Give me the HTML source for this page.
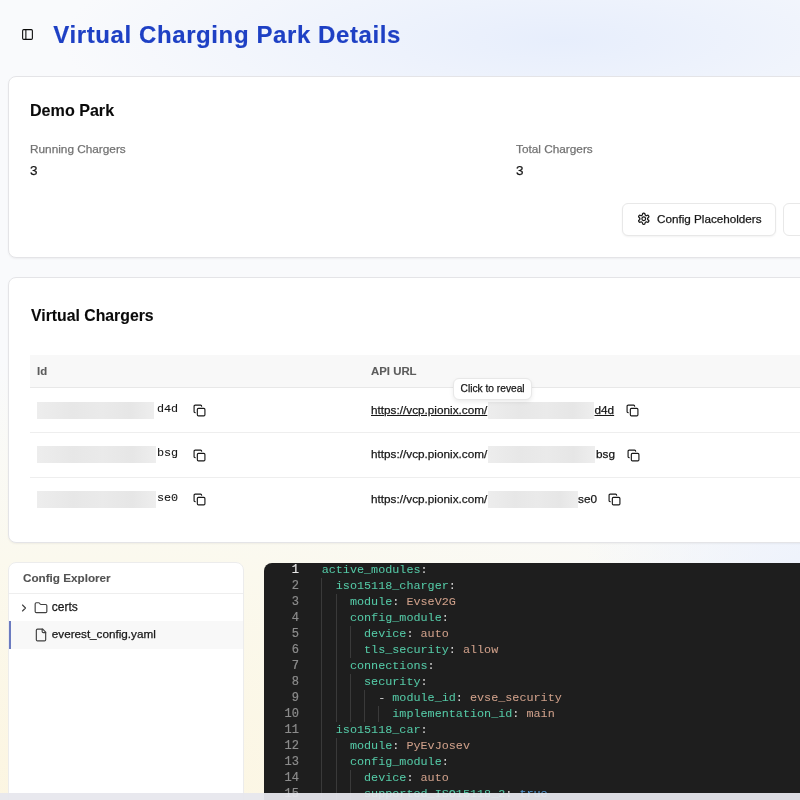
<!DOCTYPE html>
<html><head><meta charset="utf-8">
<style>
*{box-sizing:border-box;margin:0;padding:0}
html,body{width:800px;height:800px;overflow:hidden}
body{position:relative;font-family:"Liberation Sans",sans-serif;color:#0a0a0a;
background:
 radial-gradient(ellipse 500px 120px at 560px 40px, rgba(231,238,252,1), rgba(231,238,252,0) 100%),
 radial-gradient(ellipse 240px 300px at 820px 620px, rgba(236,241,252,1), rgba(236,241,252,0) 100%),
 radial-gradient(ellipse 900px 440px at 80px 800px, rgba(252,245,224,1) 0%, rgba(251,249,238,1) 55%, rgba(250,250,244,0) 100%),
 #f9fafc;}
.abs{position:absolute}
svg.i{position:absolute;fill:none;stroke:currentColor;stroke-linecap:round;stroke-linejoin:round}
.card{position:absolute;left:8px;width:1000px;background:#fff;border:1px solid #e4e4e7;border-radius:8px;box-shadow:0 1px 2px rgba(0,0,0,0.05)}
.t{position:absolute;white-space:pre;line-height:1;-webkit-text-stroke:0.25px currentColor}
.blur{position:absolute;height:16.5px;background:linear-gradient(90deg,#ededed 0%,#e7e7e7 30%,#eaeaea 55%,#e6e6e6 80%,#eeeeee 100%);filter:blur(0.7px)}
.hr{position:absolute;height:1px;background:#eeeeee}
.code{position:absolute;font-family:"Liberation Mono",monospace;font-size:11.78px;white-space:pre;line-height:16px}
.k{color:#55c9a6;-webkit-text-stroke:0.05px #55c9a6}.v{color:#cfa08a;-webkit-text-stroke:0.05px #cfa08a}.p{color:#d4d4d4;-webkit-text-stroke:0.05px #d4d4d4}.b{color:#569cd6;-webkit-text-stroke:0.05px #569cd6}
.ln{position:absolute;white-space:pre;font-family:"Liberation Mono",monospace;font-size:12px;line-height:16px;color:#8c8c8c;text-align:right;width:30px;-webkit-text-stroke:0.2px currentColor}
.g{position:absolute;width:1px;background:#3a3a3a}
</style></head><body><div style="position:absolute;left:0;top:0;width:800px;height:800px;will-change:transform">

<!-- header -->
<svg class="i" style="left:20.6px;top:27.8px;color:#0a0a0a" width="13" height="13" viewBox="0 0 24 24" stroke-width="2"><rect width="18" height="18" x="3" y="3" rx="2"/><path d="M9 3v18"/></svg>
<div class="t" style="left:53.3px;top:23.2px;font-size:24px;letter-spacing:0.6px;font-weight:700;color:#1e40c4;-webkit-text-stroke:0.15px #1e40c4">Virtual Charging Park Details</div>

<!-- card 1 -->
<div class="card" style="top:76px;height:182px"></div>
<div class="t" style="left:30px;top:101.5px;font-size:16.1px;font-weight:700;-webkit-text-stroke:0.1px currentColor">Demo Park</div>
<div class="t" style="left:30px;top:144px;font-size:11.8px;color:#737373">Running Chargers</div>
<div class="t" style="left:30px;top:163.5px;font-size:13.5px;color:#171717">3</div>
<div class="t" style="left:516px;top:144px;font-size:11.8px;color:#737373">Total Chargers</div>
<div class="t" style="left:516px;top:163.5px;font-size:13.5px;color:#171717">3</div>
<div class="abs" style="left:622px;top:203px;width:154px;height:33px;border:1px solid #e8e8e8;border-radius:6px;background:#fff;box-shadow:0 1px 2px rgba(0,0,0,0.05)"></div>
<svg class="i" style="left:636.9px;top:212.3px;color:#171717" width="13.5" height="13.5" viewBox="0 0 24 24" stroke-width="2.2"><path d="M12.22 2h-.44a2 2 0 0 0-2 2v.18a2 2 0 0 1-1 1.730l-.43.25a2 2 0 0 1-2 0l-.15-.08a2 2 0 0 0-2.73.73l-.22.38a2 2 0 0 0 .73 2.73l.15.1a2 2 0 0 1 1 1.72v.51a2 2 0 0 1-1 1.74l-.15.09a2 2 0 0 0-.73 2.73l.22.38a2 2 0 0 0 2.73.73l.15-.08a2 2 0 0 1 2 0l.43.25a2 2 0 0 1 1 1.73V20a2 2 0 0 0 2 2h.44a2 2 0 0 0 2-2v-.18a2 2 0 0 1 1-1.73l.43-.25a2 2 0 0 1 2 0l.15.08a2 2 0 0 0 2.73-.73l.22-.39a2 2 0 0 0-.73-2.73l-.15-.08a2 2 0 0 1-1-1.74v-.5a2 2 0 0 1 1-1.74l.15-.09a2 2 0 0 0 .73-2.73l-.22-.38a2 2 0 0 0-2.73-.73l-.15.08a2 2 0 0 1-2 0l-.43-.25a2 2 0 0 1-1-1.73V4a2 2 0 0 0-2-2z"/><circle cx="12" cy="12" r="3.3"/></svg>
<div class="t" style="left:657px;top:213px;font-size:11.7px;color:#171717">Config Placeholders</div>
<div class="abs" style="left:783px;top:203px;width:154px;height:33px;border:1px solid #e8e8e8;border-radius:6px;background:#fff"></div>

<!-- card 2 -->
<div class="card" style="top:277px;height:265.5px"></div>
<div class="t" style="left:31px;top:308px;font-size:15.8px;font-weight:700;-webkit-text-stroke:0.1px currentColor">Virtual Chargers</div>
<div class="abs" style="left:30px;top:355px;width:1000px;height:33px;background:#f8f8f8;border-bottom:1px solid #e8e8e8"></div>
<div class="t" style="left:37px;top:366px;font-size:11.4px;font-weight:700;color:#5c5c5c;-webkit-text-stroke:0.1px currentColor">Id</div>
<div class="t" style="left:371px;top:366px;font-size:11.4px;font-weight:700;color:#5c5c5c;-webkit-text-stroke:0.1px currentColor">API URL</div>
<div class="hr" style="left:30px;top:432px;width:1000px"></div>
<div class="hr" style="left:30px;top:477px;width:1000px"></div>

<!-- rows -->
<div class="blur" style="left:37px;top:402px;width:117px"></div>
<div class="t" style="left:157px;top:403.5px;font-size:11.78px;font-family:'Liberation Mono',monospace;color:#171717;-webkit-text-stroke:0.1px currentColor">d4d</div>
<svg class="i" style="left:193.2px;top:403.7px;color:#171717" width="13" height="13" viewBox="0 0 24 24" stroke-width="2.1"><rect width="14" height="14" x="8" y="8" rx="2" ry="2"/><path d="M4 16c-1.1 0-2-.9-2-2V4c0-1.1.9-2 2-2h10c1.1 0 2 .9 2 2"/></svg>
<div class="t" style="left:371px;top:404px;font-size:11.75px;color:#171717;text-decoration:underline">https://vcp.pionix.com/</div>
<div class="blur" style="left:488px;top:402px;width:106px"></div>
<div class="t" style="left:594.5px;top:404px;font-size:11.75px;color:#171717;text-decoration:underline">d4d</div>
<svg class="i" style="left:626px;top:403.7px;color:#171717" width="13" height="13" viewBox="0 0 24 24" stroke-width="2.1"><rect width="14" height="14" x="8" y="8" rx="2" ry="2"/><path d="M4 16c-1.1 0-2-.9-2-2V4c0-1.1.9-2 2-2h10c1.1 0 2 .9 2 2"/></svg>

<div class="blur" style="left:37px;top:446px;width:119px"></div>
<div class="t" style="left:157px;top:447.5px;font-size:11.78px;font-family:'Liberation Mono',monospace;color:#171717;-webkit-text-stroke:0.1px currentColor">bsg</div>
<svg class="i" style="left:193.2px;top:448.7px;color:#171717" width="13" height="13" viewBox="0 0 24 24" stroke-width="2.1"><rect width="14" height="14" x="8" y="8" rx="2" ry="2"/><path d="M4 16c-1.1 0-2-.9-2-2V4c0-1.1.9-2 2-2h10c1.1 0 2 .9 2 2"/></svg>
<div class="t" style="left:371px;top:448px;font-size:11.75px;color:#171717">https://vcp.pionix.com/</div>
<div class="blur" style="left:488px;top:446px;width:107px"></div>
<div class="t" style="left:596px;top:448px;font-size:11.75px;color:#171717">bsg</div>
<svg class="i" style="left:626.8px;top:448.7px;color:#171717" width="13" height="13" viewBox="0 0 24 24" stroke-width="2.1"><rect width="14" height="14" x="8" y="8" rx="2" ry="2"/><path d="M4 16c-1.1 0-2-.9-2-2V4c0-1.1.9-2 2-2h10c1.1 0 2 .9 2 2"/></svg>

<div class="blur" style="left:37px;top:491px;width:119px"></div>
<div class="t" style="left:157px;top:492.5px;font-size:11.78px;font-family:'Liberation Mono',monospace;color:#171717;-webkit-text-stroke:0.1px currentColor">se0</div>
<svg class="i" style="left:193.2px;top:493px;color:#171717" width="13" height="13" viewBox="0 0 24 24" stroke-width="2.1"><rect width="14" height="14" x="8" y="8" rx="2" ry="2"/><path d="M4 16c-1.1 0-2-.9-2-2V4c0-1.1.9-2 2-2h10c1.1 0 2 .9 2 2"/></svg>
<div class="t" style="left:371px;top:493px;font-size:11.75px;color:#171717">https://vcp.pionix.com/</div>
<div class="blur" style="left:488px;top:491px;width:90px"></div>
<div class="t" style="left:578px;top:493px;font-size:11.75px;color:#171717">se0</div>
<svg class="i" style="left:608.2px;top:493px;color:#171717" width="13" height="13" viewBox="0 0 24 24" stroke-width="2.1"><rect width="14" height="14" x="8" y="8" rx="2" ry="2"/><path d="M4 16c-1.1 0-2-.9-2-2V4c0-1.1.9-2 2-2h10c1.1 0 2 .9 2 2"/></svg>

<!-- tooltip -->
<div class="abs" style="left:452.5px;top:378px;width:79px;height:21.5px;background:#fff;border:1px solid #e8e8e8;border-radius:6px;box-shadow:0 2px 4px rgba(0,0,0,0.08)"></div>
<div class="t" style="left:460.6px;top:383.7px;font-size:10.2px;color:#171717">Click to reveal</div>

<!-- explorer -->
<div class="abs" style="left:8px;top:562px;width:236px;height:260px;background:#fff;border:1px solid #ececec;border-radius:8px"></div>
<div class="t" style="left:23px;top:572px;font-size:11.7px;font-weight:700;color:#525252;-webkit-text-stroke:0.1px currentColor">Config Explorer</div>
<div class="abs" style="left:9px;top:593px;width:234px;height:1px;background:#eeeeee"></div>
<svg class="i" style="left:18px;top:601.5px;color:#404040" width="12" height="12" viewBox="0 0 24 24" stroke-width="2.3"><path d="m9 18 6-6-6-6"/></svg>
<svg class="i" style="left:34.3px;top:601px;color:#404040" width="14" height="14" viewBox="0 0 24 24" stroke-width="2"><path d="M20 20a2 2 0 0 0 2-2V8a2 2 0 0 0-2-2h-7.9a2 2 0 0 1-1.69-.9L9.6 3.9A2 2 0 0 0 7.93 3H4a2 2 0 0 0-2 2v13a2 2 0 0 0 2 2Z"/></svg>
<div class="t" style="left:51.8px;top:601.4px;font-size:12px;color:#171717">certs</div>
<div class="abs" style="left:9px;top:621px;width:234px;height:28px;background:#f8f8f8;border-left:2px solid #6b7bc0"></div>
<svg class="i" style="left:34px;top:628.2px;color:#404040" width="14" height="14" viewBox="0 0 24 24" stroke-width="2"><path d="M15 2H6a2 2 0 0 0-2 2v16a2 2 0 0 0 2 2h12a2 2 0 0 0 2-2V7Z"/><path d="M14 2v4a2 2 0 0 0 2 2h4"/></svg>
<div class="t" style="left:51.8px;top:628.3px;font-size:11.7px;color:#171717">everest_config.yaml</div>

<!-- editor -->
<div class="abs" style="left:264px;top:563px;width:800px;height:260px;background:#1e1e1e;border-radius:8px;overflow:hidden">
  
</div>
<div class="ln" style="left:269px;top:562.2px"><span style="color:#e6e6e6">1</span>
2
3
4
5
6
7
8
9
10
11
12
13
14
15</div>
<div class="g" style="left:321px;top:578px;height:224px"></div>
<div class="g" style="left:336px;top:594px;height:128px"></div>
<div class="g" style="left:350px;top:626px;height:32px"></div>
<div class="g" style="left:350px;top:674px;height:48px"></div>
<div class="g" style="left:364px;top:690px;height:32px"></div>
<div class="g" style="left:378px;top:706px;height:16px"></div>
<div class="g" style="left:336px;top:738px;height:64px"></div>
<div class="g" style="left:350px;top:770px;height:32px"></div>
<div class="code" style="left:321.7px;top:562.3px"><span class="k">active_modules</span><span class="p">:</span>
  <span class="k">iso15118_charger</span><span class="p">:</span>
    <span class="k">module</span><span class="p">:</span> <span class="v">EvseV2G</span>
    <span class="k">config_module</span><span class="p">:</span>
      <span class="k">device</span><span class="p">:</span> <span class="v">auto</span>
      <span class="k">tls_security</span><span class="p">:</span> <span class="v">allow</span>
    <span class="k">connections</span><span class="p">:</span>
      <span class="k">security</span><span class="p">:</span>
        <span class="p">-</span> <span class="k">module_id</span><span class="p">:</span> <span class="v">evse_security</span>
          <span class="k">implementation_id</span><span class="p">:</span> <span class="v">main</span>
  <span class="k">iso15118_car</span><span class="p">:</span>
    <span class="k">module</span><span class="p">:</span> <span class="v">PyEvJosev</span>
    <span class="k">config_module</span><span class="p">:</span>
      <span class="k">device</span><span class="p">:</span> <span class="v">auto</span>
      <span class="k">supported_ISO15118_2</span><span class="p">:</span> <span class="b">true</span></div>

<!-- bottom scrollbar -->
<div class="abs" style="left:0;top:793px;width:800px;height:7px;background:rgba(231,231,237,0.95)"></div>
</div></body></html>
